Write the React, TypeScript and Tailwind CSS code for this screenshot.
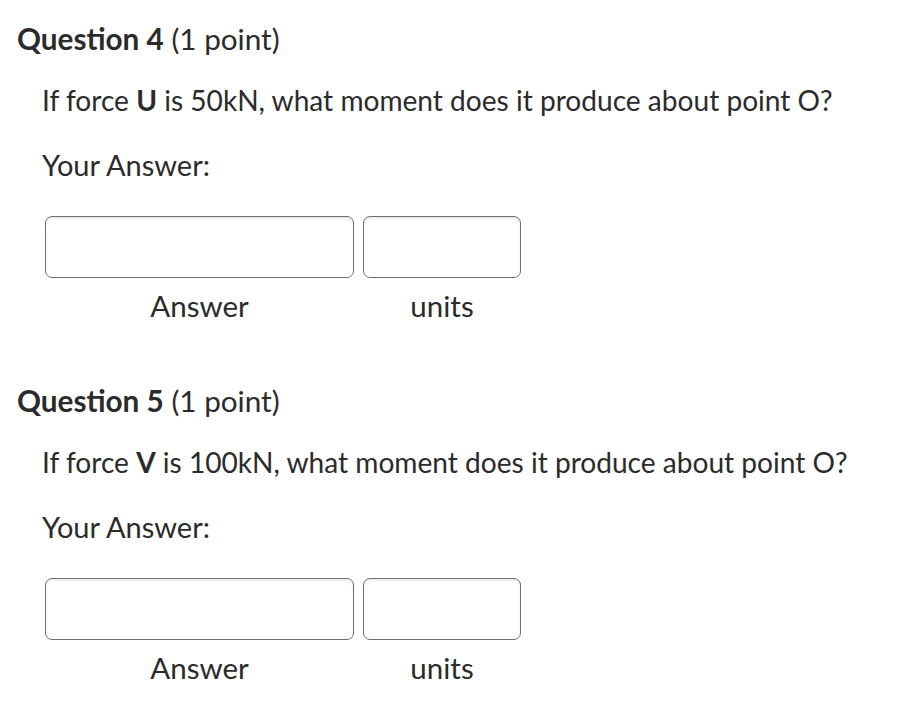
import React from "react";

interface Question {
  num: number;
  force: string;
  value: string;
}

const questions: Question[] = [
  { num: 4, force: "U", value: "50kN," },
  { num: 5, force: "V", value: "100kN," },
];

function QuestionBlock({ q }: { q: Question }) {
  return (
    <div className="h-[362px]">
      <h2 className="pt-[22px] pl-[17px] text-[29.7px] leading-[34px]">
        <span className="font-bold">Question {q.num}</span> (1 point)
      </h2>
      <div className="pl-[42px]">
        <p className="mt-[27px] text-[28.1px] leading-[34px]">
          If force <strong className="font-bold">{q.force}</strong> is {q.value} what moment does it produce
          about point O?
        </p>
        <p className="mt-[31px] text-[29px] leading-[34px]">Your Answer:</p>
        <div className="mt-[34px] flex gap-[9px] pl-[3px]">
          <div className="flex w-[309px] flex-col items-center">
            <div className="h-[62px] w-full rounded-[7px] border border-[#6f6f6f] shadow-[inset_0_2px_2px_rgba(0,0,0,0.08)]" />
            <span className="mt-[11px] text-[29.5px] leading-[34px]">Answer</span>
          </div>
          <div className="flex w-[158px] flex-col items-center">
            <div className="h-[62px] w-full rounded-[7px] border border-[#6f6f6f] shadow-[inset_0_2px_2px_rgba(0,0,0,0.08)]" />
            <span className="mt-[11px] text-[29.5px] leading-[34px]">units</span>
          </div>
        </div>
      </div>
    </div>
  );
}

export default function App() {
  return (
    <div className="h-[710px] w-[906px] overflow-hidden bg-white text-[#2b2b2b] font-['Lato',sans-serif]">
      {questions.map((q) => (
        <QuestionBlock key={q.num} q={q} />
      ))}
    </div>
  );
}
